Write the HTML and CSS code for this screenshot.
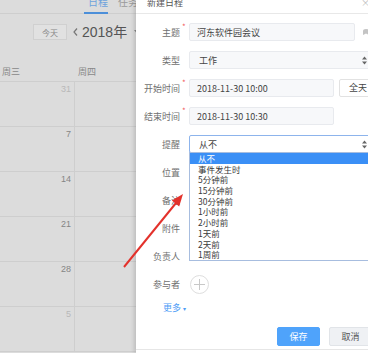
FILE: index.html
```html
<!DOCTYPE html>
<html lang="zh-CN">
  <head>
    <meta charset="UTF-8" />
    <meta name="viewport" content="width=device-width, initial-scale=1" />
    <title>新建日程</title>
    <link rel="stylesheet" href="styles.css">
  </head>
  <body>
    <div class="app">
      <aside class="calendar">
        <div class="cal-tabs">
          <span class="tab active">日程</span>
          <span class="tab">任务</span>
        </div>
        <div class="cal-toolbar">
          <button class="today" type="button">今天</button>
          <svg class="prev" width="5" height="8" viewBox="0 0 5 8"><path d="M4 0.5 L1 4 L4 7.5" fill="none" stroke="#777" stroke-width="1.2"/></svg>
          <span class="year">2018年</span>
          <svg class="caret" width="5" height="4" viewBox="0 0 5 4"><path d="M0 0 H5 L2.5 3 Z" fill="#888"/></svg>
        </div>
        <div class="week-head">
          <span class="wd">周三</span>
          <span class="wd">周四</span>
        </div>
        <div class="cal-grid">
          <div class="cal-row"><div class="cell muted">31</div><div class="cell"></div></div>
          <div class="cal-row"><div class="cell">7</div><div class="cell"></div></div>
          <div class="cal-row"><div class="cell">14</div><div class="cell"></div></div>
          <div class="cal-row"><div class="cell">21</div><div class="cell"></div></div>
          <div class="cal-row"><div class="cell">28</div><div class="cell"></div></div>
          <div class="cal-row"><div class="cell muted">5</div><div class="cell"></div></div>
        </div>
      </aside>

      <section class="panel">
        <div class="panel-head">
          <span>新建日程</span>
          <span class="close">×</span>
        </div>

        <form class="form">
          <div class="row">
            <span class="label">主题</span><span class="req">*</span>
            <div class="field w-title">河东软件园会议</div>
            <svg class="side-icon" width="8" height="8" viewBox="0 0 8 8"><path d="M1 7 L1 3 Q1 1 4 1 Q7 1 7 3 L7 7 L4 5.5 Z" fill="#c4c4c4"/></svg>
          </div>

          <div class="row">
            <span class="label">类型</span><span class="req"></span>
            <div class="field w-select">
              <span>工作</span>
              <svg width="5" height="9" viewBox="0 0 5 9"><path d="M0 3.5 L2.5 0.5 L5 3.5 Z M0 5.5 L2.5 8.5 L5 5.5 Z" fill="#666"/></svg>
            </div>
          </div>

          <div class="row">
            <span class="label">开始时间</span><span class="req">*</span>
            <div class="field w-date">2018-11-30 10:00</div>
            <div class="allday">全天</div>
          </div>

          <div class="row">
            <span class="label">结束时间</span><span class="req">*</span>
            <div class="field w-date">2018-11-30 10:30</div>
          </div>

          <div class="row">
            <span class="label">提醒</span><span class="req"></span>
            <div class="field w-select remind">
              <span>从不</span>
              <svg width="5" height="9" viewBox="0 0 5 9"><path d="M0 3.5 L2.5 0.5 L5 3.5 Z M0 5.5 L2.5 8.5 L5 5.5 Z" fill="#666"/></svg>
              <ul class="options">
                <li class="active">从不</li>
                <li>事件发生时</li>
                <li>5分钟前</li>
                <li>15分钟前</li>
                <li>30分钟前</li>
                <li>1小时前</li>
                <li>2小时前</li>
                <li>1天前</li>
                <li>2天前</li>
                <li>1周前</li>
              </ul>
            </div>
          </div>

          <div class="row"><span class="label">位置</span></div>
          <div class="row"><span class="label">备注</span></div>
          <div class="row"><span class="label">附件</span></div>
          <div class="row"><span class="label">负责人</span></div>

          <div class="row">
            <span class="label">参与者</span><span class="req"></span>
            <span class="add">
              <svg width="11" height="11" viewBox="0 0 11 11"><path d="M5.5 0 V11 M0 5.5 H11" stroke="#c8c8c8" stroke-width="1"/></svg>
            </span>
          </div>

          <div class="more">更多 <span class="more-caret">▾</span></div>
        </form>

        <div class="foot">
          <button class="btn primary" type="button">保存</button>
          <button class="btn plain" type="button">取消</button>
        </div>
      </section>

      <svg class="arrow" width="368" height="353" viewBox="0 0 368 353">
        <line x1="124" y1="267" x2="176" y2="203" stroke="#e3312b" stroke-width="2"/>
        <path d="M183 194 L179.2 206.4 L171.8 200.4 Z" fill="#e3312b"/>
      </svg>
    </div>
  </body>
</html>
```

FILE: styles.css
```css
* {
  box-sizing: border-box;
  margin: 0;
  padding: 0;
}

body {
  font-family: "Noto Sans CJK SC", "Noto Sans", sans-serif;
  font-size: 9px;
  background: #fff;
  overflow: hidden;
}

.app {
  position: relative;
  display: flex;
  width: 368px;
  height: 353px;
  overflow: hidden;
}

/* calendar behind the dialog, dimmed */
.calendar {
  flex: none;
  width: 136px;
  overflow: hidden;
  background: #dcdcdc;
  color: #888;
}

.cal-tabs {
  display: flex;
  gap: 10px;
  height: 14px;
  padding-left: 84px;
  border-bottom: 1px solid #cecece;
  white-space: nowrap;
}

.tab {
  height: 14px;
  line-height: 4px;
  font-size: 10px;
  color: #9a9a9a;
}

.tab.active {
  width: 26px;
  padding-left: 4px;
  color: #6ea3dc;
  border-bottom: 2px solid #4c8fd9;
}

.cal-toolbar {
  display: flex;
  align-items: center;
  height: 16px;
  margin-top: 10px;
  padding-left: 33px;
  white-space: nowrap;
}

.cal-toolbar > * {
  flex: none;
}

.today {
  width: 34px;
  height: 16px;
  border: 1px solid #d0d0d0;
  background: #e1e1e1;
  color: #888;
  font-family: inherit;
  font-size: 8px;
}

.prev {
  margin-left: 6px;
}

.year {
  margin-left: 4px;
  font-family: "Liberation Sans", "Noto Sans CJK SC", sans-serif;
  font-size: 14px;
  line-height: 16px;
  color: #555;
}

.caret {
  margin-left: 7px;
}

.week-head {
  display: flex;
  height: 42px;
  padding-top: 27px;
  line-height: 10px;
  border-bottom: 1px solid #cecece;
}

.wd:first-child {
  width: 75px;
  padding-left: 2px;
}

.wd {
  padding-left: 3px;
}

.cal-row {
  display: flex;
  height: 45px;
  border-bottom: 1px solid #cecece;
}

.cell {
  flex: 1;
  padding: 2px 3px 0 0;
  text-align: right;
  line-height: 10px;
  font-family: "Liberation Sans", sans-serif;
  color: #858585;
}

.cell:first-child {
  flex: none;
  width: 75px;
  border-right: 1px solid #cecece;
}

.cell.muted {
  color: #b8b8b8;
}

/* dialog */
.panel {
  position: relative;
  z-index: 1;
  flex: none;
  width: 245px;
  background: #fff;
  box-shadow: -2px 0 4px rgba(0, 0, 0, 0.14);
  display: flex;
  flex-direction: column;
}

.panel-head {
  display: flex;
  height: 14px;
  padding-left: 11px;
  line-height: 5px;
  color: #555;
  border-bottom: 1px solid #e8e8e8;
}

.close {
  margin-left: auto;
  margin-right: 11px;
  color: #bbb;
}

.form {
  display: flex;
  flex-direction: column;
  gap: 10px;
  padding-top: 9px;
}

.row {
  display: flex;
  align-items: center;
  height: 18px;
}

.label {
  flex: none;
  width: 44px;
  text-align: right;
  color: #707070;
}

.req {
  flex: none;
  align-self: flex-start;
  width: 9px;
  padding-left: 2px;
  line-height: 8px;
  font-size: 8px;
  color: #f25c5c;
}

.field {
  flex: none;
  display: flex;
  align-items: center;
  height: 18px;
  padding-left: 7px;
  background: #f7f8fa;
  border: 1px solid #e8eaee;
  border-radius: 2px;
  color: #444;
}

.w-title {
  width: 166px;
}

.w-date {
  width: 145px;
}

.w-select {
  width: 183px;
  padding-left: 9px;
  padding-right: 4px;
  justify-content: space-between;
}

.side-icon {
  margin-left: 7px;
}

.allday {
  flex: none;
  width: 40px;
  height: 18px;
  margin-left: 5px;
  padding-left: 9px;
  line-height: 16px;
  border: 1px solid #e2e2e2;
  border-radius: 2px;
  color: #444;
}

.remind {
  position: relative;
  background: #fff;
  border-color: #8db4ec;
}

.options {
  position: absolute;
  top: 16px;
  left: -1px;
  width: 183px;
  list-style: none;
  background: #fff;
  border: 1px solid #a7bddf;
  font-size: 8.5px;
}

.options li {
  height: 10.7px;
  line-height: 10.7px;
  padding-left: 8px;
  color: #3a3a3a;
}

.options li.active {
  background: #3a8ff6;
  color: #fff;
}

.add {
  display: flex;
  align-items: center;
  justify-content: center;
  width: 19px;
  height: 19px;
  margin-left: 1px;
  border: 1px solid #dedede;
  border-radius: 50%;
}

.more {
  height: 10px;
  padding-left: 27px;
  line-height: 10px;
  color: #4d9cf6;
}

.more-caret {
  font-size: 6px;
}

.foot {
  display: flex;
  justify-content: flex-end;
  gap: 9px;
  margin-top: 14px;
  padding-right: 9px;
  padding-bottom: 3px;
  border-bottom: 1px solid #e6e6e6;
}

.btn {
  width: 43px;
  height: 19px;
  border-radius: 2px;
  font-family: inherit;
  font-size: 9px;
}

.btn.primary {
  background: #4fa3fb;
  border: 1px solid #4fa3fb;
  color: #fff;
}

.btn.plain {
  background: #eff1f4;
  border: 1px solid #e1e4e8;
  color: #555;
}

.arrow {
  position: absolute;
  top: 0;
  left: 0;
  z-index: 2;
  pointer-events: none;
}
```
